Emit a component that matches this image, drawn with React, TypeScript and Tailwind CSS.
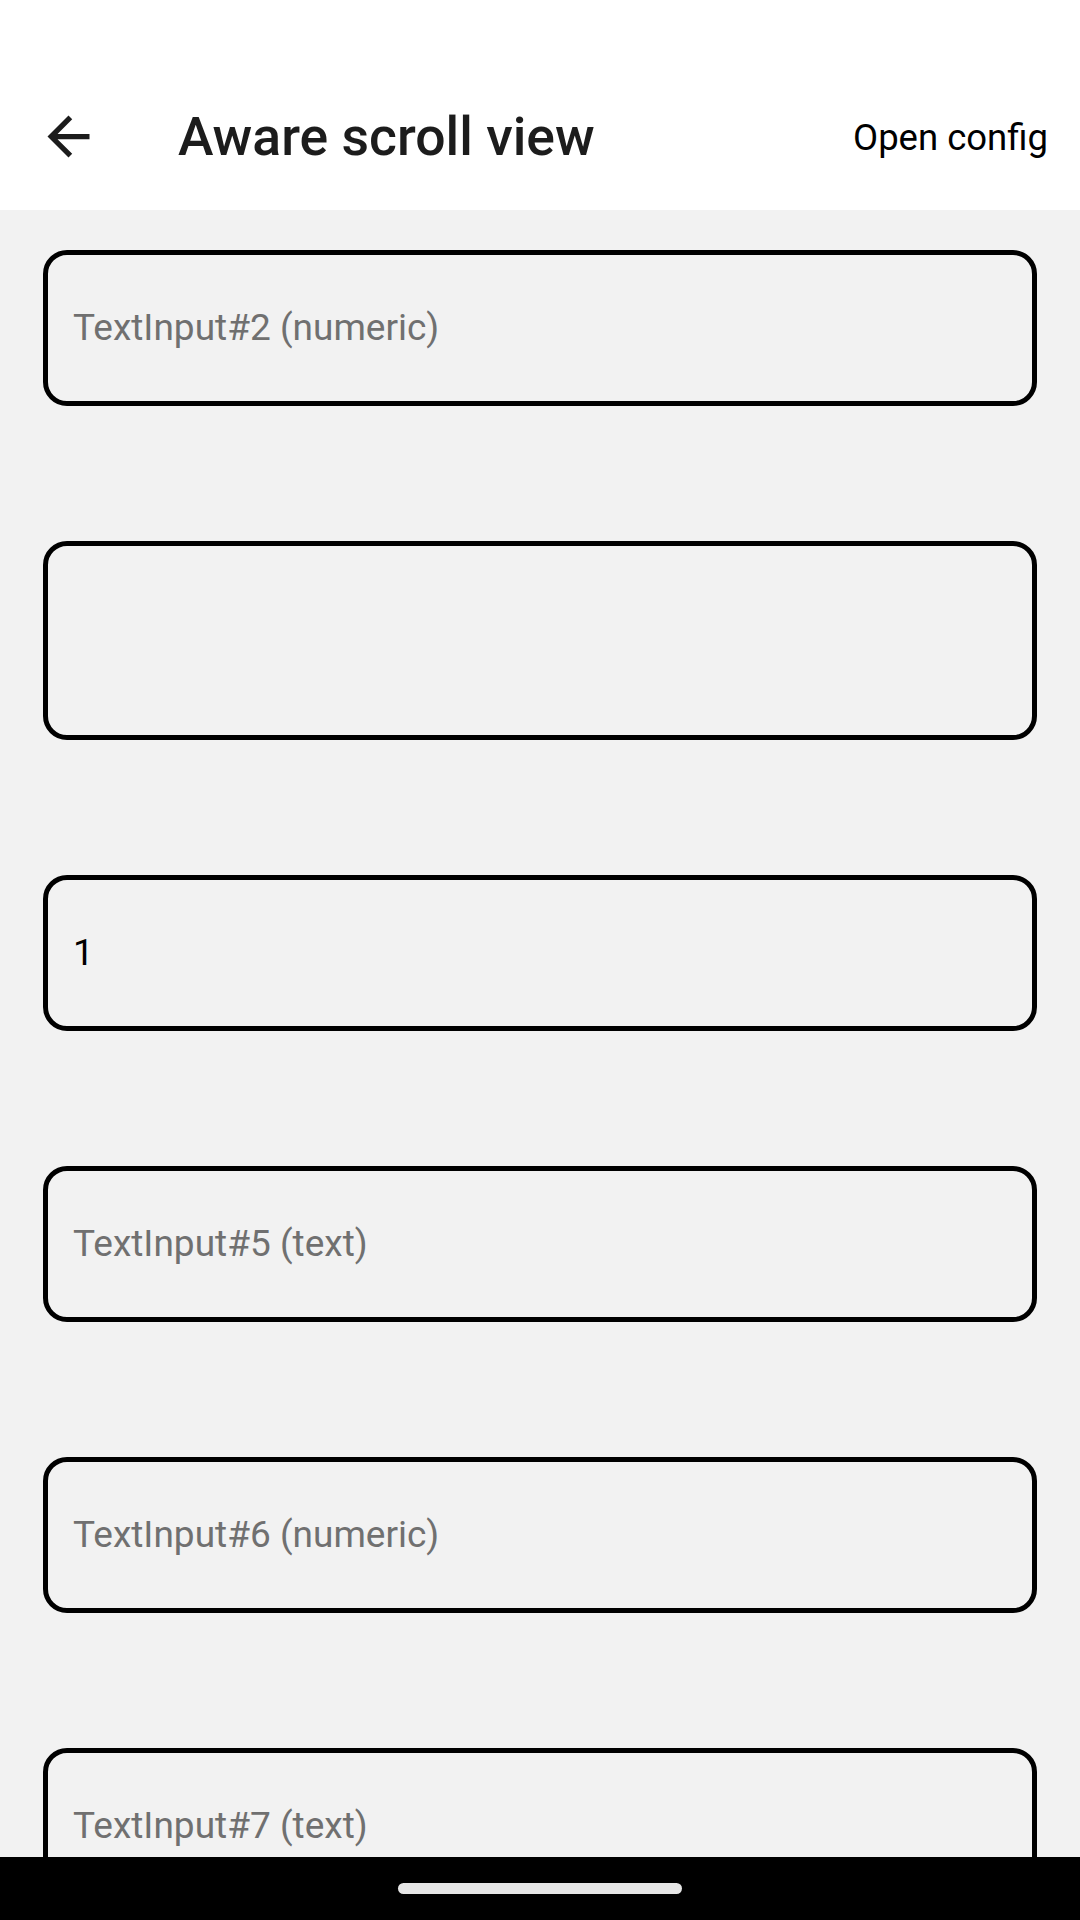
import React from 'react'

const inputs = [
  { placeholder: 'TextInput#2 (numeric)', value: '', tall: false },
  { placeholder: '', value: '', tall: true },
  { placeholder: '', value: '1', tall: false },
  { placeholder: 'TextInput#5 (text)', value: '', tall: false },
  { placeholder: 'TextInput#6 (numeric)', value: '', tall: false },
  { placeholder: 'TextInput#7 (text)', value: '', tall: false },
]

function BackArrow() {
  return (
    <svg width="63" height="63" viewBox="0 0 24 24" className="shrink-0 text-[#1c1c1c]">
      <path fill="currentColor" d="M20 11H7.83l5.59-5.59L12 4l-8 8 8 8 1.41-1.41L7.83 13H20v-2z" />
    </svg>
  )
}

export default function App() {
  return (
    <div
      className="w-[1080px] h-[1920px] flex flex-col overflow-hidden bg-[#f2f2f2]"
      style={{ fontFamily: 'Roboto, "Noto Sans", sans-serif' }}
    >
      {/* status bar */}
      <div className="h-[63px] shrink-0 bg-white" />

      {/* app bar */}
      <div className="h-[147px] shrink-0 bg-white flex items-center">
        <div className="ml-[37px]">
          <BackArrow />
        </div>
        <div className="ml-[78px] mt-[2px] text-[53.5px] font-medium text-[#1c1c1c]">Aware scroll view</div>
        <div className="ml-auto mr-[32px] mt-[4px] text-[36.5px] text-black">Open config</div>
      </div>

      {/* scroll content */}
      <div className="flex-1 overflow-hidden">
        <div className="flex flex-col gap-[135px] pt-[40px] px-[43px]">
          {inputs.map((item, i) => (
            <div
              key={i}
              className={
                'shrink-0 flex items-center border-[5px] border-black rounded-[24px] pl-[25px] ' +
                (item.tall ? 'h-[199px]' : 'h-[156px]')
              }
            >
              {item.value ? (
                <span className="text-[37px] text-black">{item.value}</span>
              ) : (
                <span className="text-[37px] text-[#707070]">{item.placeholder}</span>
              )}
            </div>
          ))}
        </div>
      </div>

      {/* nav bar */}
      <div className="h-[63px] shrink-0 bg-black flex justify-center pt-[26px]">
        <div className="w-[284px] h-[11px] rounded-full bg-[#e6e6e6]" />
      </div>
    </div>
  )
}
